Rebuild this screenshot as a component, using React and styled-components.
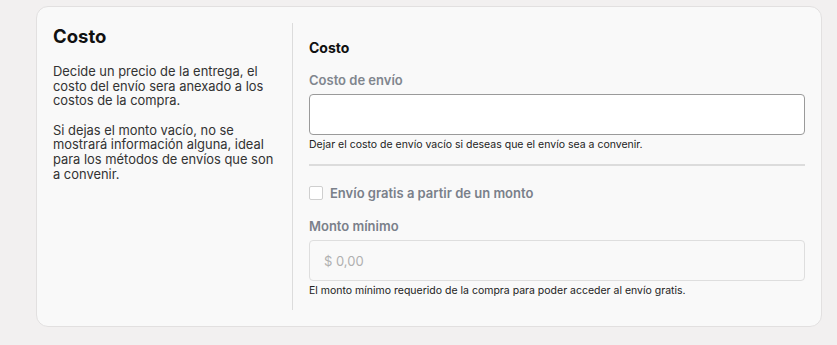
import React from "react";
import styled, { createGlobalStyle } from "styled-components";

const GlobalStyle = createGlobalStyle`
  * { box-sizing: border-box; }
  body {
    margin: 0;
    background: #f2f0f0;
    font-family: Inter, "Noto Sans", sans-serif;
    color: #222;
  }
`;

const Page = styled.div`
  padding: 6px 0 0 36px;
`;

const Card = styled.section`
  width: 786px;
  height: 321px;
  background: #f9f9f9;
  border: 1px solid #e2e0e0;
  border-radius: 12px;
  padding: 16px;
  display: grid;
  grid-template-columns: 239px 1fr;
`;

const Intro = styled.div`
  padding: 2px 16px 0 0;
`;

const Title = styled.h2`
  margin: 0 0 18px;
  font-size: 18.5px;
  font-weight: 700;
  color: #111;
  line-height: 22px;
`;

const Desc = styled.p`
  margin: 0 0 14.5px;
  font-size: 12.9px;
  line-height: 14.7px;
  color: #333;
`;

const Form = styled.div`
  border-left: 1px solid #dcdcdc;
  padding: 16px 0 0 16px;
  display: flex;
  flex-direction: column;
`;

const SectionTitle = styled.h3`
  margin: 0 0 16px;
  font-size: 14px;
  font-weight: 700;
  color: #111;
  line-height: 17px;
`;

const Label = styled.label`
  display: block;
  font-size: 13px;
  font-weight: 600;
  color: ${(p) => (p.$muted ? "#7a808a" : "#80868e")};
  line-height: 16px;
  margin-bottom: 6px;
`;

const Input = styled.input`
  display: block;
  width: 100%;
  height: 41px;
  border-radius: 4px;
  border: 1px solid ${(p) => (p.disabled ? "#dedede" : "#9a9a9a")};
  background: ${(p) => (p.disabled ? "#f9f9f9" : "#fff")};
  padding: 0 14px;
  font-family: inherit;
  font-size: 13px;
  color: #333;
  outline: none;
  &::placeholder { color: #b0b0b0; }
`;

const Help = styled.div`
  font-size: 10.5px;
  line-height: 13px;
  color: #222;
  margin-top: 3px;
`;

const Rule = styled.hr`
  margin: 13px 0 0;
  border: 0;
  height: 2px;
  background: #dcdcdc;
`;

const CheckRow = styled.label`
  display: flex;
  align-items: center;
  gap: 7px;
  margin: 19px 0 17px;
  font-size: 13px;
  font-weight: 600;
  color: #7a808a;
  line-height: 16px;
`;

const Box = styled.span`
  width: 14px;
  height: 14px;
  border: 1px solid #cfcfcf;
  border-radius: 2px;
  background: #fff;
`;

export default function App() {
  return (
    <>
      <GlobalStyle />
      <Page>
        <Card>
          <Intro>
            <Title>Costo</Title>
            <Desc>
              Decide un precio de la entrega, el costo del envío sera anexado a
              los costos de la compra.
            </Desc>
            <Desc>
              Si dejas el monto vacío, no se mostrará información alguna, ideal
              para los métodos de envíos que son a convenir.
            </Desc>
          </Intro>
          <Form>
            <SectionTitle>Costo</SectionTitle>
            <Label>Costo de envío</Label>
            <Input type="text" />
            <Help>
              Dejar el costo de envío vacío si deseas que el envío sea a
              convenir.
            </Help>
            <Rule />
            <CheckRow>
              <Box />
              Envío gratis a partir de un monto
            </CheckRow>
            <Label $muted>Monto mínimo</Label>
            <Input type="text" placeholder="$ 0,00" disabled />
            <Help>
              El monto mínimo requerido de la compra para poder acceder al envío
              gratis.
            </Help>
          </Form>
        </Card>
      </Page>
    </>
  );
}
